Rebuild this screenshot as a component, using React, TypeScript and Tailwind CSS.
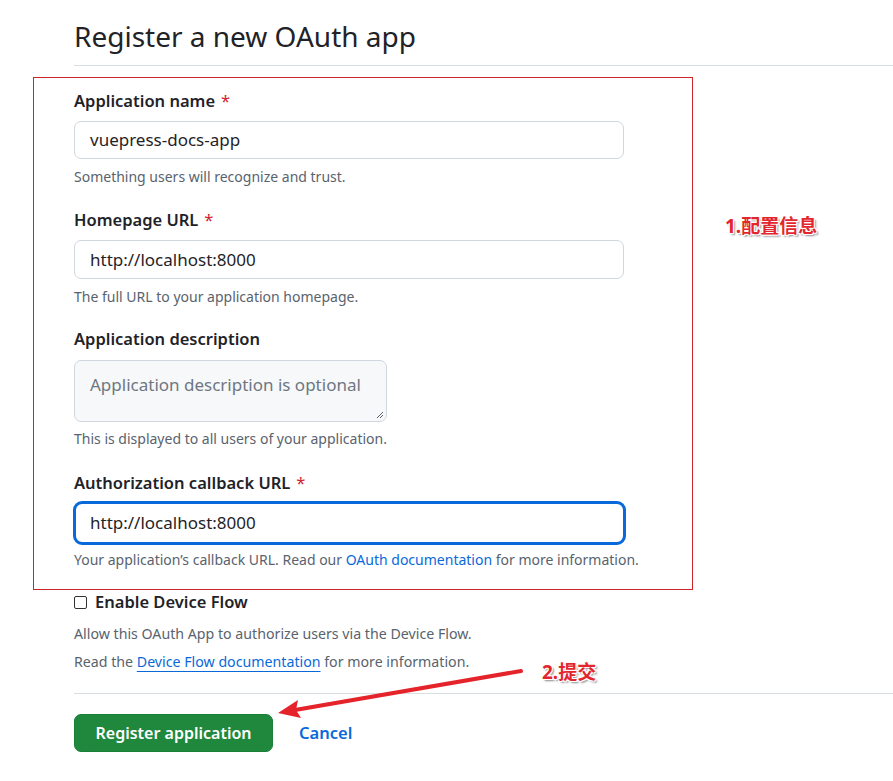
import React from 'react';

function Label({ text, required }: { text: string; required?: boolean }) {
  return (
    <div className="text-[16.5px] leading-[22px] font-semibold text-[#1f2328]">
      {text}
      {required && <span className="ml-[6px] text-[#d1242f] font-normal">*</span>}
    </div>
  );
}

function Help({ children, className = '' }: { children: React.ReactNode; className?: string }) {
  return <p className={`text-[14px] leading-[19px] text-[#59636e] ${className}`}>{children}</p>;
}

export default function App() {
  return (
    <div className="relative w-[893px] h-[781px] overflow-hidden bg-white font-['Noto_Sans','Noto_Sans_CJK_SC',sans-serif]">
      <div className="pl-[74px]">
        <div className="pt-[17px] pb-[10px] border-b border-[#d8dee4]">
          <h1 className="text-[28px] leading-[38px] font-normal text-[#1f2328]">Register a new OAuth app</h1>
        </div>

        <div className="w-[550px]">
          <div className="mt-[24px]">
            <Label text="Application name" required />
            <div className="mt-[9px] h-[38px] border border-[#d0d7de] rounded-[7px] flex items-center pl-[15px] text-[17px] text-[#1f2328]">
              vuepress-docs-app
            </div>
            <Help className="mt-[8px]">Something users will recognize and trust.</Help>
          </div>

          <div className="mt-[23px]">
            <Label text="Homepage URL" required />
            <div className="mt-[9px] h-[39px] border border-[#d0d7de] rounded-[7px] flex items-center pl-[15px] text-[17px] text-[#1f2328]">
              http://localhost:8000
            </div>
            <Help className="mt-[8px]">The full URL to your application homepage.</Help>
          </div>

          <div className="mt-[22px]">
            <Label text="Application description" />
            <div className="relative mt-[10px] w-[313px] h-[62px] bg-[#f6f8fa] border border-[#d0d7de] rounded-[7px] pl-[15px] pt-[12px] text-[17px] leading-[24px] text-[#6e7781]">
              Application description is optional
              <svg className="absolute right-[2px] bottom-[2px]" width="10" height="10" viewBox="0 0 10 10">
                <path d="M9 3 L3 9 M9 6 L6 9" stroke="#57606a" strokeWidth="1" fill="none" />
              </svg>
            </div>
            <Help className="mt-[7px]">This is displayed to all users of your application.</Help>
          </div>

          <div className="mt-[24px]">
            <Label text="Authorization callback URL" required />
            <div className="mt-[7px] -ml-[1px] w-[553px] h-[44px] border-[3px] border-[#0969da] rounded-[9px] flex items-center pl-[14px] text-[17px] text-[#1f2328]">
              http://localhost:8000
            </div>
            <Help className="mt-[5px] whitespace-nowrap">
              Your application’s callback URL. Read our <span className="text-[#0969da]">OAuth documentation</span> for more information.
            </Help>
          </div>
        </div>

        <div className="mt-[22px] flex items-center gap-[8px]">
          <span className="w-[13px] h-[13px] border border-[#333] rounded-[2px] bg-white" />
          <span className="text-[16.5px] leading-[22px] font-semibold text-[#1f2328]">Enable Device Flow</span>
        </div>
        <p className="mt-[10px] text-[14.2px] leading-[22px] text-[#59636e]">
          Allow this OAuth App to authorize users via the Device Flow.
        </p>
        <p className="mt-[6px] text-[14.2px] leading-[22px] text-[#59636e]">
          Read the <span className="text-[#0969da] underline underline-offset-[4px]">Device Flow documentation</span> for more information.
        </p>

        <div className="mt-[20px] border-t border-[#d8dee4]" />

        <div className="mt-[20px] flex items-center gap-[26px]">
          <button className="w-[199px] h-[38px] rounded-[7px] bg-[#1f883d] border border-[#1a7f37] text-white text-[16px] font-semibold">
            Register application
          </button>
          <span className="text-[16.5px] font-semibold text-[#0969da]">Cancel</span>
        </div>
      </div>

      {/* annotations */}
      <div className="absolute left-[33px] top-[77px] w-[660px] h-[513px] border border-[#d0242b] pointer-events-none" />
      <div className="absolute left-[725px] top-[213px] text-[19px] leading-[26px] font-bold text-[#e3262e] [text-shadow:1px_1px_0_#fff,-1px_-1px_0_#fff,1px_-1px_0_#fff,-1px_1px_0_#fff,2px_2px_2px_#888]">
        1.配置信息
      </div>
      <div className="absolute left-[542px] top-[659px] text-[19px] leading-[26px] font-bold text-[#e3262e] [text-shadow:1px_1px_0_#fff,-1px_-1px_0_#fff,1px_-1px_0_#fff,-1px_1px_0_#fff,2px_2px_2px_#888]">
        2.提交
      </div>
      <svg className="absolute left-0 top-0 pointer-events-none" width="893" height="781">
        <line x1="521" y1="671" x2="295" y2="710" stroke="#e5232b" strokeWidth="4" strokeLinecap="round" />
        <polygon points="278,713 298,700 296,710 301,718" fill="#e5232b" />
      </svg>
    </div>
  );
}
